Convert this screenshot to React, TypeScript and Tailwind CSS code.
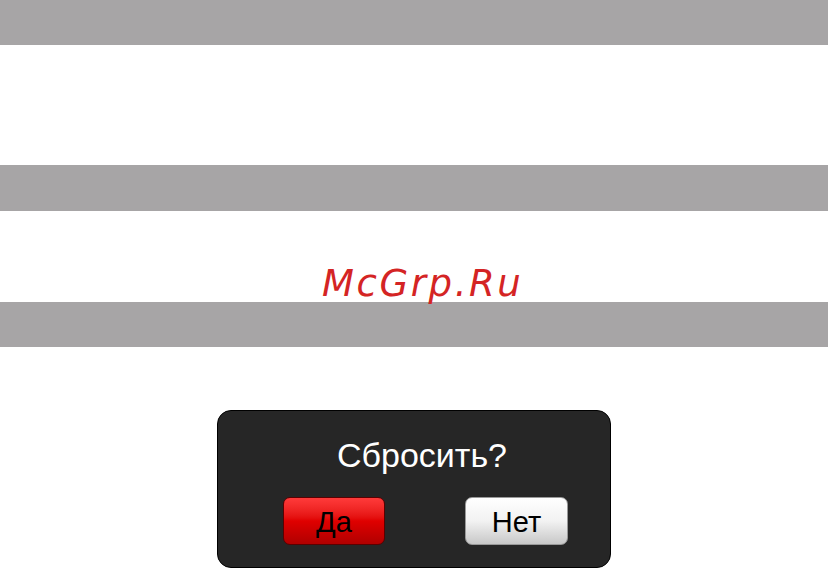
import React from 'react';

export default function App() {
  return (
    <div className="relative w-[828px] h-[571px] bg-white overflow-hidden font-['Liberation_Sans',Arial,sans-serif]">
      <div className="flex flex-col">
        <div className="w-full h-[45px] bg-[#a7a5a6]" />
        <div className="h-[120px]" />
        <div className="w-full h-[46px] bg-[#a7a5a6]" />
        <div className="h-[91px]" />
        <div className="w-full h-[45px] bg-[#a7a5a6]" />
        <div className="h-[63px]" />
        <div className="flex justify-center">
          <div className="w-[394px] h-[158px] rounded-[14px] bg-[#262626] border border-black flex flex-col">
            <div className="pt-[27px] pl-[16px] text-center text-white text-[34px] leading-none">
              Сбросить?
            </div>
            <div className="mt-[25px] flex justify-between pl-[65px] pr-[42px]">
              <button className="w-[102px] h-[48px] pt-[3px] rounded-[7px] border border-[#5a0000] bg-gradient-to-b from-[#ff3a3a] via-[#e00000] to-[#b00000] text-black text-[29px] leading-none">
                Да
              </button>
              <button className="w-[103px] h-[48px] pt-[3px] rounded-[7px] border border-[#999] bg-gradient-to-b from-white via-[#f2f2f2] to-[#c8c8c8] text-black text-[29px] leading-none">
                Нет
              </button>
            </div>
          </div>
        </div>
      </div>
      <div className="absolute left-[322px] top-[262px] text-[#d42424] italic text-[37px] leading-[44px] tracking-[2.6px] font-['DejaVu_Sans',sans-serif]">
        McGrp.Ru
      </div>
    </div>
  );
}
